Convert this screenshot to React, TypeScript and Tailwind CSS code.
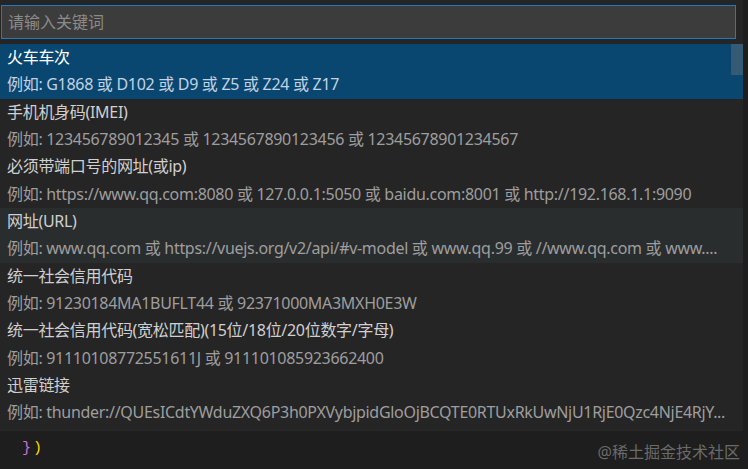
const items = [
  { label: '火车车次', example: '例如: G1868 或 D102 或 D9 或 Z5 或 Z24 或 Z17' },
  { label: '手机机身码(IMEI)', example: '例如: 123456789012345 或 1234567890123456 或 12345678901234567' },
  {
    label: '必须带端口号的网址(或ip)',
    example: '例如: https://www.qq.com:8080 或 127.0.0.1:5050 或 baidu.com:8001 或 http://192.168.1.1:9090',
  },
  {
    label: '网址(URL)',
    example: '例如: www.qq.com 或 https://vuejs.org/v2/api/#v-model 或 www.qq.99 或 //www.qq.com 或 www....',
  },
  { label: '统一社会信用代码', example: '例如: 91230184MA1BUFLT44 或 92371000MA3MXH0E3W' },
  {
    label: '统一社会信用代码(宽松匹配)(15位/18位/20位数字/字母)',
    example: '例如: 91110108772551611J 或 911101085923662400',
  },
  {
    label: '迅雷链接',
    example: '例如: thunder://QUEsICdtYWduZXQ6P3h0PXVybjpidGloOjBCQTE0RTUxRkUwNjU1RjE0Qzc4NjE4RjY...',
  },
]

export default function App() {
  return (
    <div className="relative w-[748px] h-[469px] overflow-hidden bg-[#1e1e1e] font-['Noto_Sans','Noto_Sans_CJK_SC',sans-serif]">
      {/* quick pick widget */}
      <div className="relative w-[743px] bg-[#252526] pt-[5px] pb-[4px]">
        <div className="ml-[1px] w-[735px] h-[34px] border border-[#1c7cc0] bg-[#3c3c3c] flex items-center pl-[6px] text-[16px] text-[#8b8b8b]">
          请输入关键词
        </div>

        <div className="mt-[5px]">
          {items.map((item, i) => {
            const selected = i === 0
            const hovered = i === 3
            return (
              <div
                key={i}
                className={
                  selected
                    ? 'h-[54.67px] pl-[7px] pr-[6px] bg-[#094771] text-[16px] leading-[27.33px] tracking-[-0.3px]'
                    : hovered
                      ? 'h-[54.67px] pl-[7px] pr-[6px] bg-[#2a2d2e] text-[16px] leading-[27.33px] tracking-[-0.3px]'
                      : 'h-[54.67px] pl-[7px] pr-[6px] text-[16px] leading-[27.33px] tracking-[-0.3px]'
                }
              >
                <div className={selected ? 'truncate text-white' : 'truncate text-[#d0d0d0]'}>{item.label}</div>
                <div className={selected ? 'truncate text-[#c3d3e2]' : 'truncate text-[#9e9e9e]'}>{item.example}</div>
              </div>
            )
          })}
        </div>

        {/* scrollbar slider */}
        <div className="absolute right-0 top-[44px] w-[12px] h-[31px] bg-[#79797966]" />
      </div>

      {/* editor line below */}
      <div className="flex items-center h-[38px] pl-[22px] font-['Liberation_Mono',monospace] text-[15px]">
        <span className="text-[#da70d6]">{'}'}</span>
        <span className="text-[#ffd700] ml-[2px]">)</span>
      </div>

      <div className="absolute right-[8px] bottom-[5px] text-[16px] text-[#6a6a6a]">@稀土掘金技术社区</div>
    </div>
  )
}
